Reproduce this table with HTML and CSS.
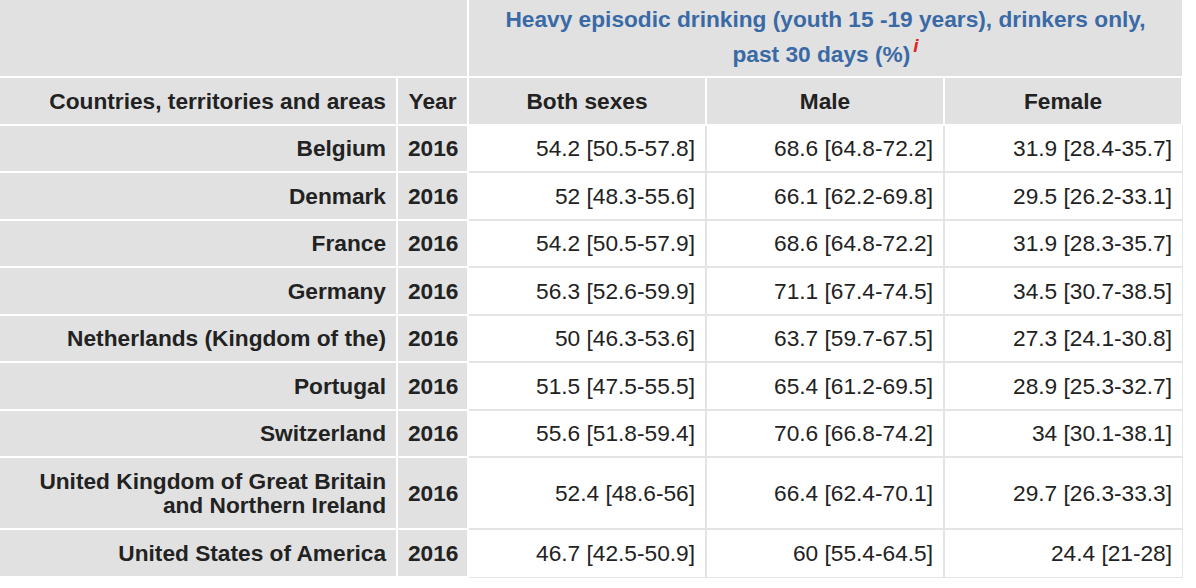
FILE: index.html
```html
<!DOCTYPE html>
<html lang="en">
<head>
<meta charset="utf-8">
<title>Heavy episodic drinking</title>
<link rel="stylesheet" href="styles.css">
</head>
<body>
<table class="data-table">
  <colgroup>
    <col class="col-country">
    <col class="col-year">
    <col class="col-value">
    <col class="col-value">
    <col class="col-value last">
  </colgroup>
  <thead>
    <tr class="title-row">
      <th colspan="2" class="blank"></th>
      <th colspan="3" class="title"><span class="title-line">Heavy episodic drinking (youth 15 -19 years), drinkers only,</span><br><span class="title-line">past 30 days (%)</span><sup class="info">i</sup></th>
    </tr>
    <tr class="head-row">
      <th class="right">Countries, territories and areas</th>
      <th class="center">Year</th>
      <th class="center">Both sexes</th>
      <th class="center">Male</th>
      <th class="center">Female</th>
    </tr>
  </thead>
  <tbody>
    <tr><th>Belgium</th><th>2016</th><td>54.2 [50.5-57.8]</td><td>68.6 [64.8-72.2]</td><td>31.9 [28.4-35.7]</td></tr>
    <tr><th>Denmark</th><th>2016</th><td>52 [48.3-55.6]</td><td>66.1 [62.2-69.8]</td><td>29.5 [26.2-33.1]</td></tr>
    <tr><th>France</th><th>2016</th><td>54.2 [50.5-57.9]</td><td>68.6 [64.8-72.2]</td><td>31.9 [28.3-35.7]</td></tr>
    <tr><th>Germany</th><th>2016</th><td>56.3 [52.6-59.9]</td><td>71.1 [67.4-74.5]</td><td>34.5 [30.7-38.5]</td></tr>
    <tr><th>Netherlands (Kingdom of the)</th><th>2016</th><td>50 [46.3-53.6]</td><td>63.7 [59.7-67.5]</td><td>27.3 [24.1-30.8]</td></tr>
    <tr><th>Portugal</th><th>2016</th><td>51.5 [47.5-55.5]</td><td>65.4 [61.2-69.5]</td><td>28.9 [25.3-32.7]</td></tr>
    <tr><th>Switzerland</th><th>2016</th><td>55.6 [51.8-59.4]</td><td>70.6 [66.8-74.2]</td><td>34 [30.1-38.1]</td></tr>
    <tr><th>United Kingdom of Great Britain and Northern Ireland</th><th>2016</th><td>52.4 [48.6-56]</td><td>66.4 [62.4-70.1]</td><td>29.7 [26.3-33.3]</td></tr>
    <tr><th>United States of America</th><th>2016</th><td>46.7 [42.5-50.9]</td><td>60 [55.4-64.5]</td><td>24.4 [21-28]</td></tr>
  </tbody>
</table>
</body>
</html>
```

FILE: styles.css
```css
html, body {
  margin: 0;
  padding: 0;
  background: #ffffff;
}

.data-table {
  border-collapse: separate;
  border-spacing: 0;
  table-layout: fixed;
  width: 1183px;
  font-family: "Liberation Sans", Arial, Helvetica, sans-serif;
  font-size: 22.7px;
  line-height: 24.5px;
  color: #222222;
}

.col-country { width: 398px; }
.col-year { width: 71px; }
.col-value { width: 238px; }

.data-table th {
  background: #e1e1e1;
  font-weight: bold;
  text-align: right;
  padding: 10.5px 10px;
  border-right: 2px solid #ffffff;
  border-bottom: 2px solid #ffffff;
  vertical-align: middle;
}

.data-table td {
  background: #ffffff;
  text-align: right;
  padding: 10.5px 10px;
  border-right: 2px solid #e4e4e4;
  border-bottom: 2px solid #e4e4e4;
  vertical-align: middle;
}

.data-table tr td:last-child {
  border-right-width: 1px;
}

.data-table tbody tr:last-child td {
  border-bottom-width: 1px;
}

.data-table .center { text-align: center; }
.data-table .right { text-align: right; }

.title-row th {
  height: 78px;
  box-sizing: border-box;
  padding: 1.5px 10px 0;
  vertical-align: top;
  line-height: 34px;
}

.data-table .title {
  text-align: center;
  color: #3a6aa6;
  border-right: 1px solid #ffffff;
}

.info {
  color: #e0261b;
  font-style: italic;
  font-weight: bold;
  font-size: 19px;
  line-height: 1;
  vertical-align: 10px;
  margin-left: 3px;
}
```
